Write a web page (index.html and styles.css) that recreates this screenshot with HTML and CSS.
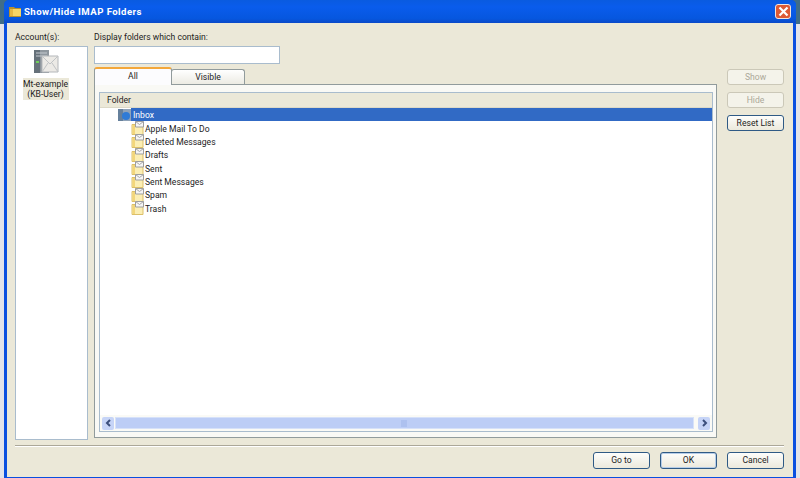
FILE: index.html
```html
<!DOCTYPE html>
<html>
<head>
<meta charset="utf-8">
<title>Show/Hide IMAP Folders</title>
<link rel="stylesheet" href="styles.css">
</head>
<body>
<div class="window">
  <div class="titlebar">
    <svg class="title-icon" width="13" height="11" viewBox="0 0 13 11"><path d="M0 1h5l1 1h6v9H0z" fill="#b8902e"/><path d="M1 3h11v7H1z" fill="#f6d566"/><path d="M1 3h3v7H1z" fill="#e6b844"/></svg>
    <span class="title-text">Show/Hide IMAP Folders</span>
    <span class="close"><svg width="11" height="11" viewBox="0 0 11 11"><path d="M1.500 1.500l8 8M9.500 1.500l-8 8" stroke="#fff" stroke-width="2.200"/></svg></span>
  </div>
  <div class="client">
    <div class="main">
      <div class="accounts-col">
        <div class="label">Account(s):</div>
        <div class="accounts">
          <svg class="server" width="26" height="25" viewBox="0 0 26 25">
            <path d="M1 1h15v23H1z" fill="#8f979e"/><path d="M1 1h6v23H1z" fill="#66717a"/><path d="M3 4h11M3 7h11" stroke="#c4cad0"/><path d="M3 13h3" stroke="#6fd05a" stroke-width="2"/>
            <path d="M9 7h16v16H9z" fill="#eceae6" stroke="#b4b7ba"/><path d="M9 7l8 8 8-8M9 23l6-9M25 23l-6-9" fill="none" stroke="#c0c3c5"/>
          </svg>
          <div class="account-name">Mt-example<br>(KB-User)</div>
        </div>
      </div>
      <div class="center">
        <div class="label">Display folders which contain:</div>
        <div class="filter"></div>
        <div class="tabs">
          <div class="tab tab-active">All</div>
          <div class="tab">Visible</div>
        </div>
        <div class="tab-panel">
          <div class="tree-box">
            <div class="tree-header">Folder</div>
            <div class="tree">
              <div class="row row-inbox">
                <svg class="inbox-icon" width="13" height="14" viewBox="0 0 13 14"><path d="M0 1h13v12H0z" fill="#8ea2b8"/><path d="M0 1h5v12H0z" fill="#66809c"/><path d="M4 8a4 4 0 0 1 8 0a4 4 0 0 1-8 0" fill="#2f7bd6"/></svg>
                <span class="row-selected">Inbox</span>
              </div>
              <div class="row"><svg class="folder"><use href="#mf"/></svg><span>Apple Mail To Do</span></div>
              <div class="row"><svg class="folder"><use href="#mf"/></svg><span>Deleted Messages</span></div>
              <div class="row"><svg class="folder"><use href="#mf"/></svg><span>Drafts</span></div>
              <div class="row"><svg class="folder"><use href="#mf"/></svg><span>Sent</span></div>
              <div class="row"><svg class="folder"><use href="#mf"/></svg><span>Sent Messages</span></div>
              <div class="row"><svg class="folder"><use href="#mf"/></svg><span>Spam</span></div>
              <div class="row"><svg class="folder"><use href="#mf"/></svg><span>Trash</span></div>
            </div>
            <div class="hscroll">
              <span class="arrow"><svg width="7" height="8" viewBox="0 0 7 8"><path d="M5 1L2 4l3 3" fill="none" stroke="#3c4f7c" stroke-width="2"/></svg></span>
              <span class="thumb"><svg width="7" height="7" viewBox="0 0 7 7"><path d="M1 0v7M3 0v7M5 0v7" stroke="#9fb5e8"/></svg></span>
              <span class="arrow"><svg width="7" height="8" viewBox="0 0 7 8"><path d="M2 1l3 3-3 3" fill="none" stroke="#3c4f7c" stroke-width="2"/></svg></span>
            </div>
          </div>
        </div>
      </div>
      <div class="side">
        <div class="btn btn-disabled">Show</div>
        <div class="btn btn-disabled">Hide</div>
        <div class="btn">Reset List</div>
      </div>
    </div>
    <div class="separator"></div>
    <div class="footer">
      <div class="btn">Go to</div>
      <div class="btn btn-default">OK</div>
      <div class="btn">Cancel</div>
    </div>
  </div>
</div>
<svg class="defs" width="0" height="0">
  <symbol id="mf" viewBox="0 0 14 14">
    <path d="M1 3.500h11v10H1z" fill="#fbeeb4" stroke="#dcc06a"/><path d="M1.500 4v9h2.500V4z" fill="#f3d67a"/>
    <path d="M4.500 .5h8v5.500h-8z" fill="#f6f6f6" stroke="#9e9e9e"/><path d="M4.500 .5l4 3 4-3" fill="none" stroke="#a8a8a8"/>
  </symbol>
</svg>
</body>
</html>
```
FILE: styles.css
```css
* { box-sizing: border-box; }
html, body { margin: 0; padding: 0; }
body {
  width: 800px; height: 478px; overflow: hidden;
  background: linear-gradient(#3f6d88 0, #3f6d88 24px, #e2e3ea 24px);
  padding: 0 4px;
  font-family: Roboto, "Liberation Sans", sans-serif;
  font-size: 8.6px;
  color: #1c1c1c;
}
.defs { display: block; }
.window {
  width: 792px; height: 478px;
  background: #0a4fe0;
  padding: 0 3px 1px 3px;
  border-radius: 5px 5px 0 0;
  display: flex; flex-direction: column;
}
.titlebar {
  height: 23px; flex: none;
  margin: 0 -3px;
  padding: 0 5px;
  display: flex; align-items: center; gap: 2px;
  background: linear-gradient(#0a5be0, #0a5cec 30%, #0657df 80%, #0a49c8);
  border-radius: 5px 5px 0 0;
}
.title-text { color: #fff; font-weight: bold; font-size: 9.6px; flex: 1; letter-spacing: 0.45px; }
.close {
  width: 16px; height: 15px;
  background: #dd5a35;
  border: 1px solid #f3e4dc; border-radius: 3px;
  display: flex; align-items: center; justify-content: center;
}
.client {
  flex: 1; background: #ebe8d8;
  padding: 8px 9px 8px 8px;
  display: flex; flex-direction: column;
}
.main { flex: 1; display: flex; min-height: 0; }
.label { height: 13px; line-height: 13px; }
.accounts-col { width: 74px; flex: none; display: flex; flex-direction: column; gap: 2px; margin-right: 5px; }
.accounts {
  height: 394px; width: 73px; background: #fff;
  border: 1px solid #a9bccd;
  display: flex; flex-direction: column; align-items: center;
  padding: 2px 12px 0 0;
}
.server { display: block; }
.account-name { text-align: center; line-height: 10px; background: #ebe8d8; padding-top: 1px; margin-top: 4px; height: 22px; width: 46px; white-space: nowrap; }
.center { width: 623px; flex: none; display: flex; flex-direction: column; }
.filter { width: 186px; height: 18px; margin-top: 2px; background: #fff; border: 1px solid #a9bccd; }
.tabs { display: flex; margin-top: 3px; height: 17px; align-items: flex-end; }
.tab {
  width: 74px; height: 15px; text-align: center; line-height: 14px;
  background: linear-gradient(#fff, #ecebe3);
  border: 1px solid #919b9c; border-bottom: 0;
  border-radius: 3px 3px 0 0;
  margin-left: -1px;
}
.tab-active {
  width: 78px; height: 18px; margin-left: 0;
  background: #fcfcfe;
  border-top: 2px solid #f3a73a;
  position: relative; top: 1px; z-index: 1;
  line-height: 14px;
}
.tab-panel {
  width: 623px; height: 354px;
  background: #f9f9f5;
  border: 1px solid #919b9c;
  padding: 7px 3px 5px 4px;
}
.tree-box { height: 100%; background: #fff; border: 1px solid #a9bccd; display: flex; flex-direction: column; }
.tree-header { height: 15px; flex: none; background: #ebe8d8; padding-left: 7px; line-height: 15px; border-bottom: 1px solid #dcd9c8; }
.tree { flex: 1; padding: 0 0 0 18px; }
.row { display: flex; align-items: center; height: 13.350px; padding-left: 13px; }
.row span { white-space: nowrap; padding-top: 1px; }
.folder { width: 14px; height: 14px; flex: none; overflow: visible; }
.row-inbox { padding-left: 0; }
.inbox-icon { flex: none; }
.row-inbox .row-selected { flex: 1; background: #316ac5; color: #fff; height: 13px; line-height: 13px; padding: 1px 0 0 2px; }
.hscroll { height: 16px; flex: none; background: #fafaf6; display: flex; align-items: center; padding: 0 2px; gap: 1px; }
.arrow { width: 12px; height: 13px; background: #c6d4f7; border-radius: 2px; display: flex; align-items: center; justify-content: center; }
.thumb { flex: 1; height: 12px; background: #bccdf6; border: 1px solid #d6e1f9; margin-right: 3px; display: flex; align-items: center; justify-content: center; }
.side { flex: 1; display: flex; flex-direction: column; align-items: flex-end; padding-top: 38px; gap: 7px; }
.btn {
  width: 57px; height: 16px; text-align: center; line-height: 14px;
  background: linear-gradient(#fdfdfb, #ece9dc);
  border: 1px solid #2f5a85; border-radius: 3px;
}
.btn-disabled { color: #aca899; border-color: #cbc8b8; background: #f4f3ea; }
.btn-default { box-shadow: inset 0 0 0 1px #b6cde8; }
.separator { height: 2px; flex: none; border-top: 1px solid #aca899; border-bottom: 1px solid #fff; margin-top: 5px; }
.footer { display: flex; justify-content: flex-end; gap: 10px; margin-top: 5px; height: 17px; }
.footer .btn { height: 17px; line-height: 15px; }
```
